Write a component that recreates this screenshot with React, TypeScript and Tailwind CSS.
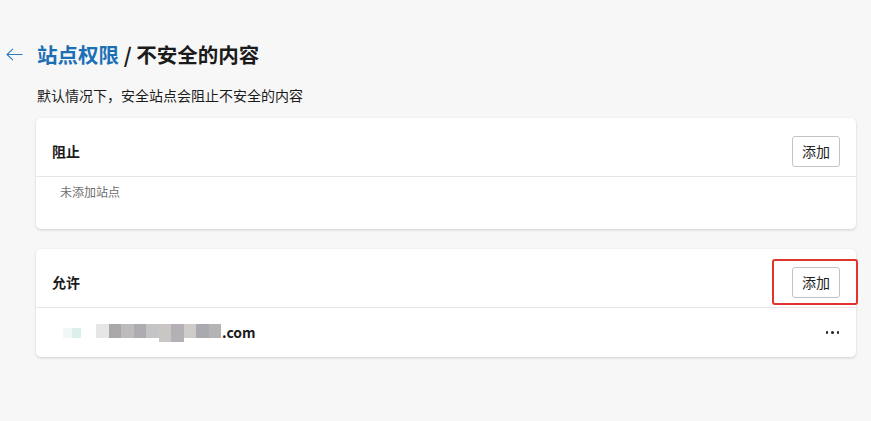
import { ReactNode } from "react";

const font = { fontFamily: '"Noto Sans CJK SC", "Noto Sans", sans-serif' };

// blurred domain blocks (pixelated screenshot censor)
const blur = [
  "#e6e6e6", "#a9a7a8", "#bdbbbb", "#aeacb0", "#c4c3c5",
  "#c9c6c4", "#b3b1b5", "#cfcbc9", "#a9aab0", "#b5b4b4",
];

const AddButton = ({ highlight }: { highlight?: boolean }) => (
  <div className="relative">
    <button className="h-[31px] w-[48px] rounded-[3px] border border-[#c4c4c4] bg-white text-[14px] text-[#222]">
      添加
    </button>
    {highlight && (
      <div className="pointer-events-none absolute -left-[20px] -right-[18px] -top-[8px] -bottom-[7px] rounded-[3px] border-2 border-[#e1342d]" />
    )}
  </div>
);

const Card = ({
  title,
  highlight,
  children,
}: {
  title: string;
  highlight?: boolean;
  children: ReactNode;
}) => (
  <div className="rounded-[5px] bg-white shadow-[0_1px_3px_rgba(0,0,0,0.16)]">
    <div className="flex h-[59px] items-center justify-between border-b border-[#e6e6e6] pb-[9px] pl-[16px] pr-[16px] pt-[18px]">
      <span className="text-[14px] font-semibold text-[#1b1b1b]">{title}</span>
      <AddButton highlight={highlight} />
    </div>
    {children}
  </div>
);

export default function App() {
  return (
    <div className="min-h-screen bg-[#f7f7f7] pl-[6px] pt-[40px]" style={font}>
      <div className="flex h-[28px] items-center gap-[15px]">
        <svg width="17" height="13" viewBox="0 0 17 13" fill="none">
          <path d="M16.5 6.5H1M7 0.8L1 6.5l6 5.7" stroke="#2b7bc0" strokeWidth="1.1" />
        </svg>
        <h1 className="-ml-px text-[20.5px] font-bold leading-[28px] text-[#1b1b1b]">
          <span className="text-[#1a6fb5]">站点权限</span> / 不安全的内容
        </h1>
      </div>

      <div className="ml-[30px] w-[820px]">
        <p className="mt-[17px] pl-[1px] text-[14px] leading-[20px] text-[#1b1b1b]">
          默认情况下，安全站点会阻止不安全的内容
        </p>

        <div className="mt-[13px] flex flex-col gap-[20px]">
          <Card title="阻止">
            <div className="h-[52px] pl-[24px] pt-[6px] text-[12px] leading-[18px] text-[#6e6e6e]">
              未添加站点
            </div>
          </Card>

          <Card title="允许" highlight>
            <div className="flex h-[49px] items-center justify-between pl-[27px] pr-[17px]">
              <div className="flex items-center">
                <div className="flex">
                  <div className="h-[10px] w-[9px] bg-[#f0f7f6]" />
                  <div className="h-[10px] w-[9px] bg-[#dcefeb]" />
                </div>
                <div className="ml-[15px] flex items-start">
                  {blur.map((c, i) => (
                    <div
                      key={i}
                      className={i === 5 || i === 6 ? "h-[18px] w-[12.5px]" : "h-[14px] w-[12.5px]"}
                      style={{ backgroundColor: c }}
                    />
                  ))}
                </div>
                <span className="ml-[1px] text-[14px] font-bold text-[#1b1b1b]">.com</span>
              </div>
              <div className="flex gap-[3px]">
                <span className="h-[2.5px] w-[2.5px] rounded-full bg-[#222]" />
                <span className="h-[2.5px] w-[2.5px] rounded-full bg-[#222]" />
                <span className="h-[2.5px] w-[2.5px] rounded-full bg-[#222]" />
              </div>
            </div>
          </Card>
        </div>
      </div>
    </div>
  );
}
